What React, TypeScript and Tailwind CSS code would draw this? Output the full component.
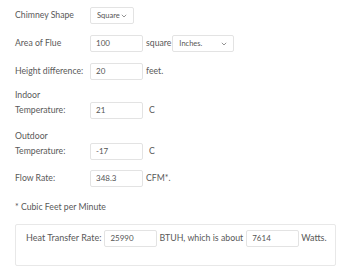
import React from "react";

const font = { fontFamily: "Lato, 'Noto Sans', sans-serif" };

function Chevron() {
  return (
    <svg width="6" height="4" viewBox="0 0 6 4" className="absolute right-[6px] top-1/2 -translate-y-1/2">
      <path d="M0.8 0.8 L3 3 L5.2 0.8" fill="none" stroke="#888" strokeWidth="0.9" />
    </svg>
  );
}

function Field({ value, w = "w-[53px]" }: { value: string; w?: string }) {
  return (
    <span className={`inline-block ${w} h-[17px] align-baseline border border-[#e3e3e3] rounded-[2px] bg-white px-[5px] text-[8px] leading-[15px] text-[#555]`}>
      {value}
    </span>
  );
}

function Select({ value, w }: { value: string; w: string }) {
  return (
    <span className={`relative inline-block ${w} h-[17px] align-baseline border border-[#e3e3e3] rounded-[2px] bg-white pl-[6px] text-[7.5px] leading-[15px] text-[#555]`}>
      {value}
      <Chevron />
    </span>
  );
}

function Row({ label, children, mt }: { label: React.ReactNode; children: React.ReactNode; mt: string }) {
  return (
    <div className={`${mt} leading-[15px]`}>
      <span className="inline-block w-[75px] align-baseline">{label}</span>
      {children}
    </div>
  );
}

export default function App() {
  return (
    <div style={font} className="w-[338px] h-[270px] overflow-hidden bg-white pl-[15px] pt-[7px] text-[8.7px] text-[#595959]">
      <Row label="Chimney Shape" mt="mt-0">
        <Select value="Square" w="w-[44px]" />
      </Row>
      <Row label="Area of Flue" mt="mt-[11px]">
        <Field value="100" />
        <span className="ml-[3px] mr-[1px]">square</span>
        <Select value="Inches." w="w-[62px]" />
      </Row>
      <Row label="Height difference:" mt="mt-[11px]">
        <Field value="20" />
        <span className="ml-[3px]">feet.</span>
      </Row>
      <Row label={<>Indoor<br />Temperature:</>} mt="mt-[7px]">
        <Field value="21" />
        <span className="ml-[6px]">C</span>
      </Row>
      <Row label={<>Outdoor<br />Temperature:</>} mt="mt-[9px]">
        <Field value="-17" />
        <span className="ml-[6px]">C</span>
      </Row>
      <Row label="Flow Rate:" mt="mt-[10px]">
        <Field value="348.3" />
        <span className="ml-[3px]">CFM*.</span>
      </Row>
      <div className="mt-[12px] leading-[15px]">* Cubic Feet per Minute</div>
      <div className="mt-[10px] mr-[2px] border border-[#e8e8e8] rounded-[2px] pl-[10px] pt-[5px] pb-[18px] leading-[15px] text-[9px]">
        <span className="align-baseline">Heat Transfer Rate:</span>
        <span className="ml-[3px]"><Field value="25990" /></span>
        <span className="ml-[2px] mr-[3px] text-[8.8px]">BTUH, which is about</span>
        <Field value="7614" />
        <span className="ml-[2px]">Watts.</span>
      </div>
    </div>
  );
}
